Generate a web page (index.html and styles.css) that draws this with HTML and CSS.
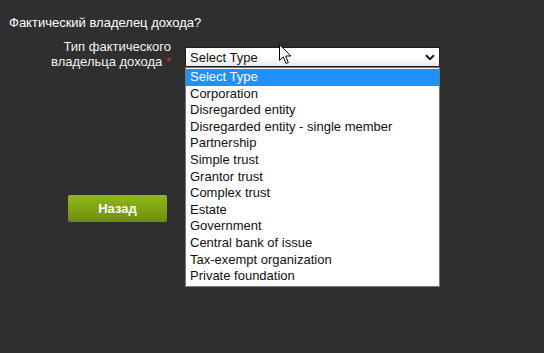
FILE: index.html
```html
<!DOCTYPE html>
<html lang="ru">
    <head>
        <meta charset="UTF-8">
        <title>Фактический владелец дохода</title>
        <link rel="stylesheet" href="styles.css">
    </head>
    <body>
        <div class="page">
            <h1 class="title">Фактический владелец дохода?</h1>
            <div class="row">
                <div class="side">
                    <label class="label">Тип фактического<br>владельца дохода <span class="req">*</span></label>
                    <button class="btn">Назад</button>
                </div>
                <div class="field">
                    <div class="select">
                        <span>Select Type</span>
                        <svg class="chev" width="10" height="7" viewBox="0 0 10 7"><path d="M1 1.2 L5 5.2 L9 1.2" fill="none" stroke="#111" stroke-width="2"/></svg>
                    </div>
                    <ul class="options">
                        <li class="active">Select Type</li>
                        <li>Corporation</li>
                        <li>Disregarded entity</li>
                        <li>Disregarded entity - single member</li>
                        <li>Partnership</li>
                        <li>Simple trust</li>
                        <li>Grantor trust</li>
                        <li>Complex trust</li>
                        <li>Estate</li>
                        <li>Government</li>
                        <li>Central bank of issue</li>
                        <li>Tax-exempt organization</li>
                        <li>Private foundation</li>
                    </ul>
                    <svg class="cursor" width="13" height="21" viewBox="0 0 13 21"><path d="M0.5 0.5 L0.5 16.5 L4.3 12.8 L7 19.5 L9.3 18.5 L6.7 12 L11.8 12 Z" fill="#fff" stroke="#000" stroke-width="1"/></svg>
                </div>
            </div>
        </div>
    </body>
</html>
```
FILE: styles.css
```css
body {
    margin: 0;
    background-color: #2f2f2f;
    font-family: "Liberation Sans", Arial, sans-serif;
    font-size: 13px;
    color: #fff;
}
.page {
    padding: 15px 0 0 9px;
}
.title {
    margin: 0;
    font-size: 13px;
    font-weight: normal;
    line-height: 15px;
}
.row {
    display: grid;
    grid-template-columns: 162px 255px;
    column-gap: 14px;
    align-items: start;
    margin-top: 9px;
}
.side {
    display: flex;
    flex-direction: column;
    align-items: flex-start;
}
.label {
    align-self: stretch;
    text-align: right;
    line-height: 15px;
    color: #f2f2f2;
}
.req {
    color: #d52b2b;
}
.field {
    position: relative;
    margin-top: 8px;
}
.select {
    height: 20px;
    box-sizing: border-box;
    border: 1px solid #1e1e1e;
    background: linear-gradient(#fff 55%, #e8e8e8);
    color: #111;
    display: flex;
    align-items: center;
    justify-content: space-between;
    padding: 0 4px;
}
.options {
    margin: 0;
    padding: 1px 0;
    list-style: none;
    background-color: #fff;
    border: 1px solid #767676;
    color: #111;
}
.options li {
    line-height: 16.6px;
    padding-left: 4px;
}
.options li.active {
    background-color: #1e90ff;
    color: #fff;
}
.cursor {
    position: absolute;
    top: -3px;
    left: 94px;
}
.btn {
    margin: 126px 0 0 59px;
    width: 99px;
    height: 27px;
    border: none;
    border-radius: 2px;
    background: linear-gradient(#93b81c, #6c8f0b);
    color: #fff;
    font-family: "Liberation Sans", Arial, sans-serif;
    font-size: 13px;
    font-weight: bold;
    cursor: pointer;
}
```
